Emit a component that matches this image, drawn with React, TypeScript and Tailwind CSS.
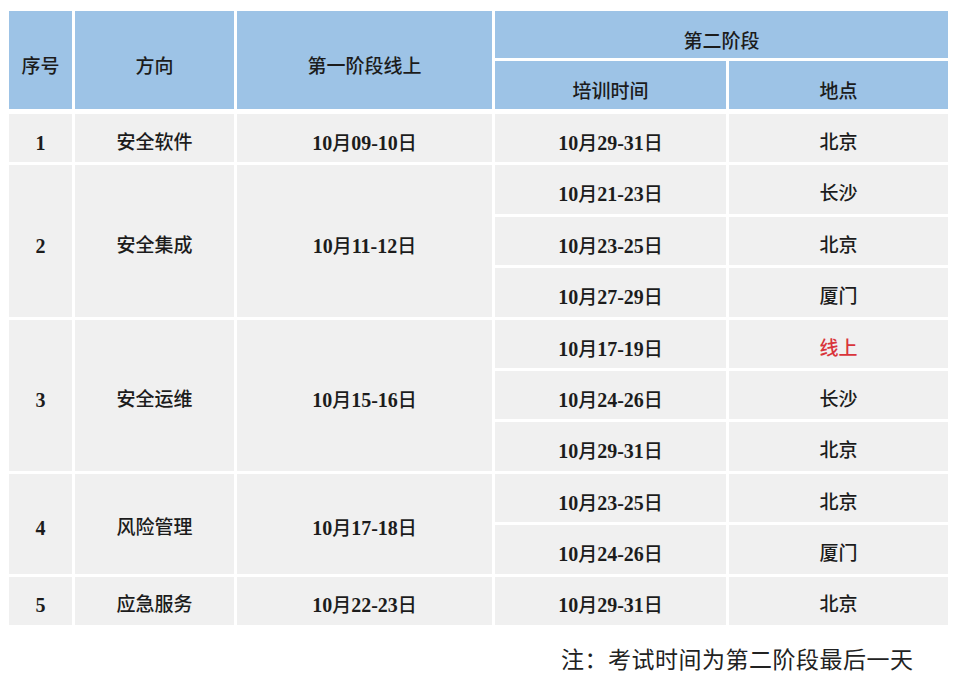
const schedule = [
  {
    no: "1",
    track: "安全软件",
    online: "10月09-10日",
    sessions: [{ date: "10月29-31日", place: "北京" }],
  },
  {
    no: "2",
    track: "安全集成",
    online: "10月11-12日",
    sessions: [
      { date: "10月21-23日", place: "长沙" },
      { date: "10月23-25日", place: "北京" },
      { date: "10月27-29日", place: "厦门" },
    ],
  },
  {
    no: "3",
    track: "安全运维",
    online: "10月15-16日",
    sessions: [
      { date: "10月17-19日", place: "线上", highlight: true },
      { date: "10月24-26日", place: "长沙" },
      { date: "10月29-31日", place: "北京" },
    ],
  },
  {
    no: "4",
    track: "风险管理",
    online: "10月17-18日",
    sessions: [
      { date: "10月23-25日", place: "北京" },
      { date: "10月24-26日", place: "厦门" },
    ],
  },
  {
    no: "5",
    track: "应急服务",
    online: "10月22-23日",
    sessions: [{ date: "10月29-31日", place: "北京" }],
  },
];

const HEAD = "flex items-center justify-center bg-[#9dc3e6] pt-[15px] text-[#1c1c1c]";
const CELL = "flex items-center justify-center bg-[#f0f0f0] pt-[10px] text-[#1c1c1c]";

// digits get the bold serif, CJK stays medium
function Txt({ s }: { s: string }) {
  const parts = s.match(/[0-9\-]+|[^0-9\-]+/g) || [];
  return (
    <span className="whitespace-nowrap">
      {parts.map((p, i) =>
        /^[0-9\-]+$/.test(p) ? (
          <span key={i} className="text-[20px] font-bold">
            {p}
          </span>
        ) : (
          <span key={i}>{p}</span>
        )
      )}
    </span>
  );
}

export default function App() {
  let row = 3;
  const cells: React.ReactNode[] = [];

  schedule.forEach((group) => {
    const span = group.sessions.length;
    const start = row;
    const spanStyle = { gridRow: `${start} / span ${span}` };
    cells.push(
      <div key={`n${group.no}`} className={CELL} style={{ ...spanStyle, gridColumn: "1" }}>
        <Txt s={group.no} />
      </div>,
      <div key={`t${group.no}`} className={CELL} style={{ ...spanStyle, gridColumn: "2" }}>
        <Txt s={group.track} />
      </div>,
      <div key={`o${group.no}`} className={CELL} style={{ ...spanStyle, gridColumn: "3" }}>
        <Txt s={group.online} />
      </div>
    );
    group.sessions.forEach((s, i) => {
      cells.push(
        <div key={`d${group.no}-${i}`} className={CELL} style={{ gridRow: `${start + i}`, gridColumn: "4" }}>
          <Txt s={s.date} />
        </div>,
        <div
          key={`p${group.no}-${i}`}
          className={`${CELL} ${s.highlight ? "!text-[#d9343b]" : ""}`}
          style={{ gridRow: `${start + i}`, gridColumn: "5" }}
        >
          {s.place}
        </div>
      );
    });
    row += span;
  });

  return (
    <div className="h-[678px] w-[955px] bg-white">
      <div className="px-[9px] pt-[11px]">
        <div
          className="grid grid-cols-[63px_159px_255px_231px_219px] grid-rows-[47px_50px_repeat(10,48.4px)] gap-[3px] text-[19px] font-medium"
          style={{ fontFamily: '"Liberation Serif", "Noto Sans CJK SC", serif' }}
        >
          <div className={`${HEAD} row-span-2 mb-[2px]`}>序号</div>
          <div className={`${HEAD} row-span-2 mb-[2px]`}>方向</div>
          <div className={`${HEAD} row-span-2 mb-[2px]`}>第一阶段线上</div>
          <div className={`${HEAD} col-span-2`}>第二阶段</div>
          <div className={`${HEAD} mb-[2px]`}>培训时间</div>
          <div className={`${HEAD} mb-[2px]`}>地点</div>
          {cells}
        </div>
      </div>
      <p
        className="mt-[22px] pl-[561px] text-[23px] leading-none tracking-[0.5px] text-[#222]"
        style={{ fontFamily: '"Noto Sans CJK SC", sans-serif' }}
      >
        注：考试时间为第二阶段最后一天
      </p>
    </div>
  );
}
